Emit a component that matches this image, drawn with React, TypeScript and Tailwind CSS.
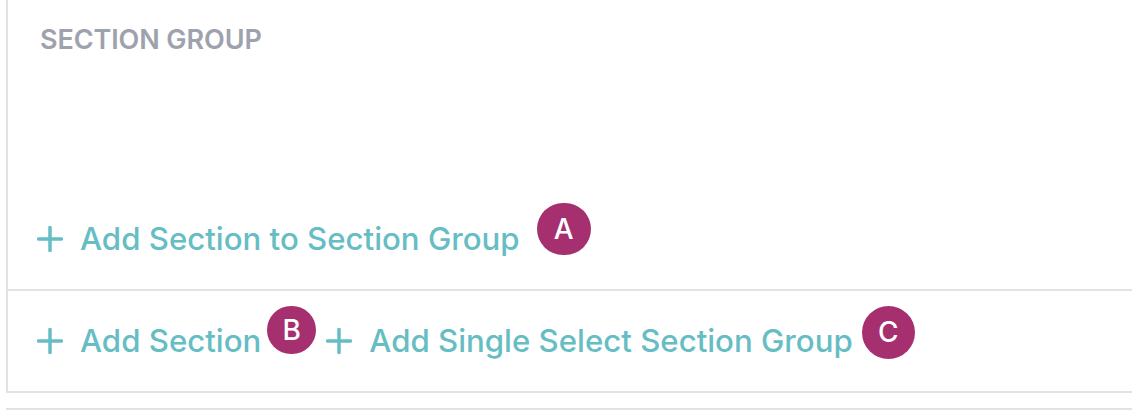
import React from "react";

function Plus() {
  return (
    <svg width="26" height="26" viewBox="0 0 26 26" className="shrink-0">
      <path d="M13 1.5v23M1.5 13h23" stroke="#66bdc3" strokeWidth="3.5" strokeLinecap="round" />
    </svg>
  );
}

function Badge({ letter, size, className }: { letter: string; size: string; className: string }) {
  return (
    <span
      className={`inline-flex shrink-0 items-center justify-center rounded-full bg-[#a6306f] text-white font-medium text-[28px] leading-none ${size} ${className}`}
    >
      {letter}
    </span>
  );
}

export default function App() {
  return (
    <div className="w-[1132px] h-[410px] bg-white overflow-hidden font-['Inter',sans-serif]">
      <div className="ml-[6px] border-l-2 border-[#e2e2e2]">
        <div className="h-[289px] flex flex-col">
          <div className="pl-[32px] pt-[24px] text-[27px] leading-[32px] font-semibold text-[#9ea2ad] tracking-[-0.1px]">
            SECTION GROUP
          </div>
          <div className="mt-auto mb-[24px] h-[52px] pl-[29px] flex items-center text-[#66bdc3] text-[31.2px] leading-[36px] font-[450]">
            <Plus />
            <span className="ml-[17px]">Add Section to Section Group</span>
            <Badge letter="A" size="w-[54px] h-[52px]" className="ml-[17px] -translate-y-[10px]" />
          </div>
        </div>
        <div className="h-[104px] border-y-2 border-[#e2e2e2] pl-[29px] flex items-center text-[#66bdc3] text-[31.2px] leading-[36px] font-[450]">
          <Plus />
          <span className="ml-[17px]">Add Section</span>
          <Badge letter="B" size="w-[49px] h-[48px]" className="ml-[6px] -translate-y-[11px]" />
          <span className="ml-[10px] flex items-center">
            <Plus />
          </span>
          <span className="ml-[17px]">Add Single Select Section Group</span>
          <Badge letter="C" size="w-[53px] h-[53px]" className="ml-[9px] -translate-y-[9px]" />
        </div>
      </div>
      <div className="mt-[15px] ml-[6px] border-t-2 border-[#e2e2e2]" />
    </div>
  );
}
